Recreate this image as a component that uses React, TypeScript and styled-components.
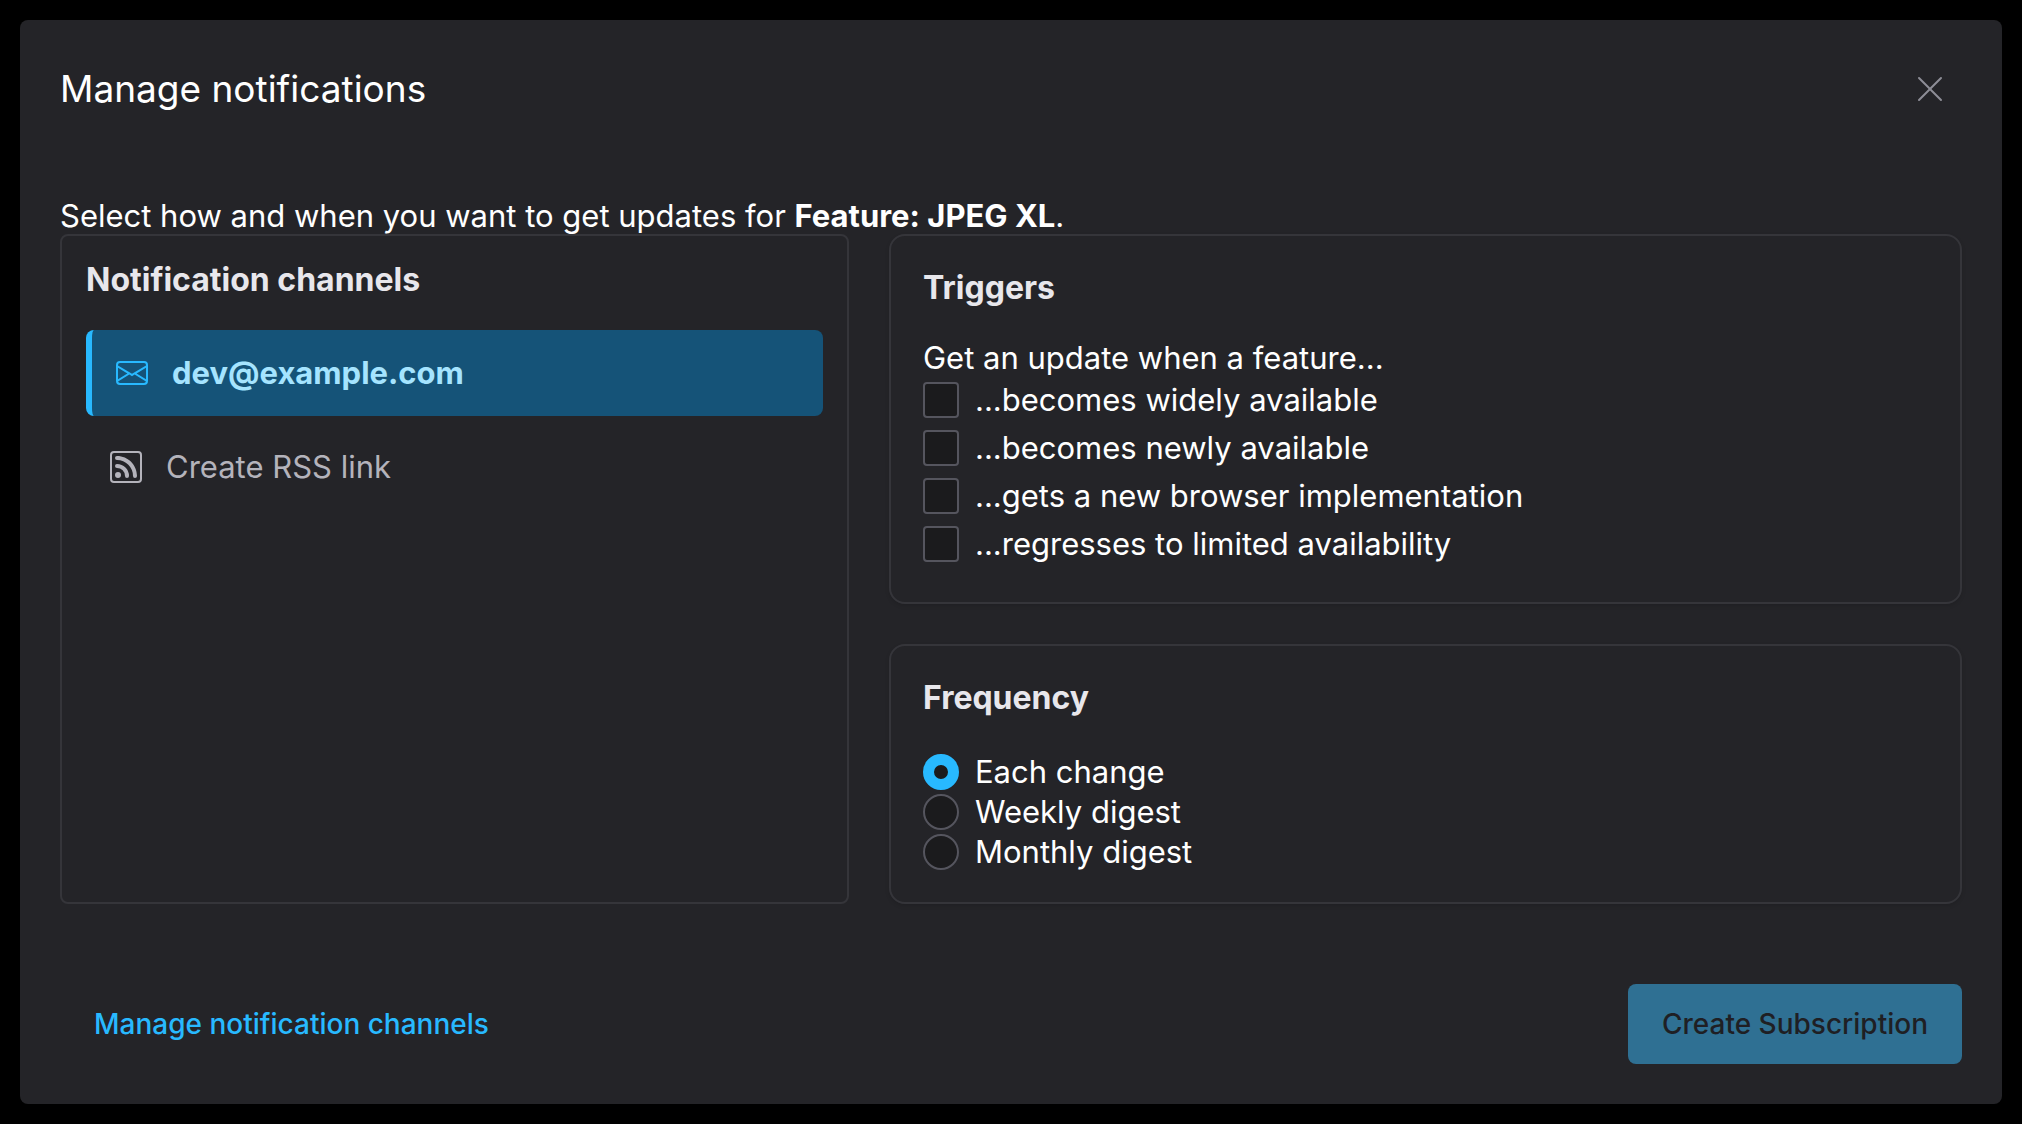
import React, { useState } from 'react';
import styled, { createGlobalStyle } from 'styled-components';
import { BsEnvelope, BsRss, BsXLg } from 'react-icons/bs';

const color = {
  panel: '#242428',
  line: '#35353a',
  field: '#1b1b1d',
  fieldLine: '#55555e',
  primary: '#28b9ff',
  heading: '#e8e7ec',
  muted: '#b4b3bb',
};

const GlobalStyle = createGlobalStyle`
  *, *::before, *::after { box-sizing: border-box; }
  body {
    margin: 0;
    background: #000;
    color: #fff;
    font: 400 31px/36px Inter, "Liberation Sans", sans-serif;
  }
  button, input { font: inherit; color: inherit; margin: 0; }
  h1, h2, p, ul { margin: 0; padding: 0; }
`;

const Page = styled.div`
  display: flex;
  min-height: 100vh;
  padding: 20px;
`;

const Dialog = styled.section`
  flex: 1;
  display: flex;
  flex-direction: column;
  border-radius: 8px;
  background: ${color.panel};
`;

const Header = styled.header`
  display: flex;
  align-items: center;
  justify-content: space-between;
  padding: 40px;
`;

const Title = styled.h1`
  font-size: 37px;
  line-height: 58px;
  font-weight: 400;
`;

const CloseButton = styled.button`
  display: flex;
  align-items: center;
  justify-content: center;
  width: 64px;
  height: 58px;
  padding: 0;
  border: 0;
  background: none;
  color: #8d8d96;
  cursor: pointer;
`;

const Body = styled.div`
  flex: 1;
  display: flex;
  flex-direction: column;
  padding: 40px;
`;

const Columns = styled.div`
  flex: 1;
  display: grid;
  grid-template-columns: minmax(0, 25fr) minmax(0, 34fr);
  gap: 40px;
`;

const Settings = styled.div`
  display: flex;
  flex-direction: column;
  gap: 40px;
`;

const Heading = styled.h2`
  margin-bottom: 32px;
  color: ${color.heading};
  font-size: 32px;
  line-height: 40px;
  font-weight: 700;
`;

const ChannelPanel = styled.section`
  padding: 24px;
  border: 2px solid ${color.line};
  border-radius: 8px;

  ${Heading} {
    margin-bottom: 30px;
  }
`;

const Card = styled.section<{ $grow?: boolean }>`
  flex: ${(p) => (p.$grow ? '1 0 auto' : '0 0 auto')};
  padding: 32px 32px 30px;
  border: 2px solid ${color.line};
  border-radius: 16px;
  box-shadow: 0 2px 4px rgba(0, 0, 0, 0.12);
`;

const ChannelList = styled.ul`
  display: flex;
  flex-direction: column;
  gap: 8px;
  list-style: none;
`;

const ChannelButton = styled.button<{ $selected: boolean }>`
  display: flex;
  align-items: center;
  gap: 24px;
  width: 100%;
  height: 86px;
  padding: 0 24px;
  border: 0 solid ${color.primary};
  border-left-width: ${(p) => (p.$selected ? '6px' : '0')};
  border-radius: 8px;
  background: ${(p) => (p.$selected ? '#155378' : 'transparent')};
  color: ${(p) => (p.$selected ? '#a5e4ff' : color.muted)};
  font-weight: ${(p) => (p.$selected ? 700 : 400)};
  text-align: left;
  cursor: pointer;

  svg {
    flex: none;
    color: ${(p) => (p.$selected ? color.primary : 'inherit')};
  }
`;

const Options = styled.div<{ $spaced?: boolean }>`
  display: flex;
  flex-direction: column;
  gap: ${(p) => (p.$spaced ? '8px' : '0')};
  padding-top: 2px;
`;

const Option = styled.label`
  display: flex;
  align-items: center;
  gap: 16px;
  height: 40px;
  cursor: pointer;
`;

const Checkbox = styled.input`
  appearance: none;
  flex: none;
  width: 36px;
  height: 36px;
  border: 2px solid ${color.fieldLine};
  border-radius: 4px;
  background: ${color.field};

  &:checked {
    border-color: ${color.primary};
    background: ${color.primary};
  }
`;

const Radio = styled.input`
  appearance: none;
  flex: none;
  width: 36px;
  height: 36px;
  border: 2px solid ${color.fieldLine};
  border-radius: 50%;
  background: ${color.field};

  &:checked {
    border: 11px solid ${color.primary};
  }
`;

const Footer = styled.footer`
  display: flex;
  align-items: center;
  justify-content: space-between;
  padding: 40px;
`;

const FooterButton = styled.button<{ $primary?: boolean }>`
  height: 80px;
  padding: 0 34px;
  border: 0;
  border-radius: 8px;
  background: ${(p) => (p.$primary ? '#2f7093' : 'none')};
  color: ${(p) => (p.$primary ? '#1f1f24' : color.primary)};
  font-size: 28px;
  font-weight: 500;
`;

const Lead = styled.p`
  padding-bottom: 2px;
`;

const triggers = [
  '...becomes widely available',
  '...becomes newly available',
  '...gets a new browser implementation',
  '...regresses to limited availability',
];

const frequencies = ['Each change', 'Weekly digest', 'Monthly digest'];

const channels = [
  { label: 'dev@example.com', Icon: BsEnvelope },
  { label: 'Create RSS link', Icon: BsRss },
];

export default function App() {
  const [channel, setChannel] = useState(0);
  const [frequency, setFrequency] = useState(frequencies[0]);

  return (
    <>
      <GlobalStyle />
      <Page>
        <Dialog role="dialog" aria-labelledby="dialog-title">
          <Header>
            <Title id="dialog-title">Manage notifications</Title>
            <CloseButton type="button" aria-label="Close">
              <BsXLg size={32} />
            </CloseButton>
          </Header>
          <Body>
            <p>
              Select how and when you want to get updates for <strong>Feature: JPEG XL</strong>.
            </p>
            <Columns>
              <ChannelPanel>
                <Heading>Notification channels</Heading>
                <ChannelList>
                  {channels.map(({ label, Icon }, i) => (
                    <li key={label}>
                      <ChannelButton
                        type="button"
                        $selected={i === channel}
                        aria-pressed={i === channel}
                        onClick={() => setChannel(i)}
                      >
                        <Icon size={32} />
                        {label}
                      </ChannelButton>
                    </li>
                  ))}
                </ChannelList>
              </ChannelPanel>
              <Settings>
                <Card $grow>
                  <Heading>Triggers</Heading>
                  <Lead id="triggers-lead">Get an update when a feature...</Lead>
                  <Options $spaced role="group" aria-labelledby="triggers-lead">
                    {triggers.map((label) => (
                      <Option key={label}>
                        <Checkbox type="checkbox" />
                        {label}
                      </Option>
                    ))}
                  </Options>
                </Card>
                <Card>
                  <Heading id="frequency-title">Frequency</Heading>
                  <Options role="radiogroup" aria-labelledby="frequency-title">
                    {frequencies.map((label) => (
                      <Option key={label}>
                        <Radio
                          type="radio"
                          name="frequency"
                          checked={frequency === label}
                          onChange={() => setFrequency(label)}
                        />
                        {label}
                      </Option>
                    ))}
                  </Options>
                </Card>
              </Settings>
            </Columns>
          </Body>
          <Footer>
            <FooterButton type="button">Manage notification channels</FooterButton>
            <FooterButton type="button" $primary disabled>
              Create Subscription
            </FooterButton>
          </Footer>
        </Dialog>
      </Page>
    </>
  );
}
